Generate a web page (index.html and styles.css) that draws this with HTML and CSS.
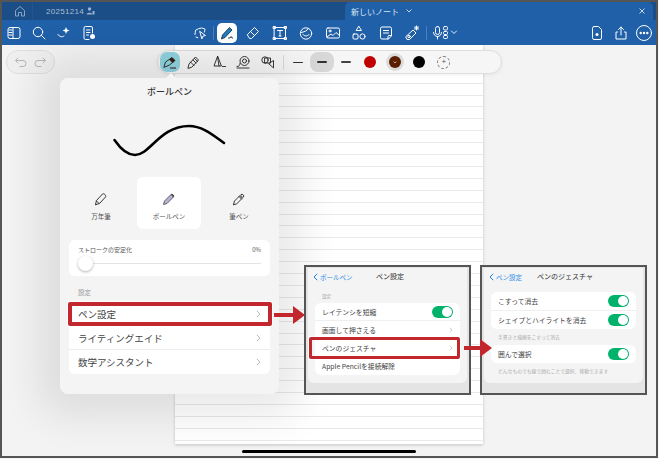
FILE: index.html
```html
<!DOCTYPE html>
<html lang="ja">
<head>
<meta charset="utf-8">
<title>ペン設定</title>
<link rel="stylesheet" href="styles.css">
</head>
<body>
<div class="frame">
  <div class="tabs">
    <div class="tab-home">
      <svg class="ic" width="14" height="14" viewBox="0 0 14 14"><path d="M2.500 12V6.500L7 2.500l4.500 4V12H8.500V8.500h-3V12z" class="tab-stroke"/></svg>
    </div>
    <div class="tab-doc"><span>20251214</span><svg width="9" height="8" viewBox="0 0 9 8"><circle cx="3.500" cy="2" r="1.700" fill="#9db4cf"/><path d="M.5 7.500C.8 5 6 5 6.500 7.500z" fill="#9db4cf"/><path d="M6.500 4h2v3.500h-2z" fill="#9db4cf"/></svg></div>
    <div class="tab-active">
      <span class="tab-name">新しいノート</span>
      <svg width="8" height="6" viewBox="0 0 8 6"><path d="M1.500 1.500L4 4l2.500-2.500" class="thin"/></svg>
      <svg class="tab-close" width="8" height="8" viewBox="0 0 8 8"><path d="M1.500 1.500l5 5m0-5l-5 5" class="thin"/></svg>
    </div>
  </div>

  <div class="toolbar">
    <div class="tb-left">
      <button class="tb"><svg width="16" height="16" viewBox="0 0 16 16"><rect x="2" y="2.500" width="12" height="11" rx="2" class="w"/><path d="M7 2.500v11M3 5h3M3 7.500h3M3 10h3" class="w"/></svg></button>
      <button class="tb"><svg width="16" height="16" viewBox="0 0 16 16"><circle cx="7" cy="7" r="4.700" class="w"/><path d="M10.500 10.500L14 14" class="w"/></svg></button>
      <button class="tb"><svg width="16" height="16" viewBox="0 0 16 16"><path d="M2 9.500c1.500 2.500 4 3 6 1.500" class="w"/><path d="M10 2l1 2.500L13.500 5.500 11 6.500 10 9 9 6.500 6.500 5.500 9 4.500z" fill="#fff"/></svg></button>
      <button class="tb"><svg width="16" height="16" viewBox="0 0 16 16"><path d="M11.500 8V3a1.500 1.500 0 00-1.500-1.500H4.500A1.500 1.500 0 003 3v10a1.500 1.500 0 001.500 1.500H8M5.500 5h3.500M5.500 7.500h3.500M5.500 10h2" class="w"/><circle cx="11.500" cy="11.500" r="2.500" fill="#fff"/></svg></button>
    </div>
    <div class="tb-center">
      <button class="tb tb-select"><svg width="16" height="16" viewBox="0 0 16 16"><path d="M4 5l3-1.500L10 3l3 1-.5 3M3 9.500l.5-4M4 12l2.500 1" class="w dash"/><path d="M8 6.500l5.500 4-2.500.5-1 2.500z" class="w"/></svg></button>
      <span class="tb-sep"></span>
      <button class="tb tb-on"><svg width="16" height="16" viewBox="0 0 16 16"><path d="M2.500 14l1-4 7-7.500 2.500 2.500-7 7.500z" fill="#1f7fc4" stroke="#123" stroke-width=".8"/><path d="M9 13h2l1-1.500 1 1.500h1" stroke="#345" stroke-width="1" fill="none"/></svg></button>
      <button class="tb"><svg width="16" height="16" viewBox="0 0 16 16"><path d="M2.500 9.500l7-7 4 4-7 7h-1.500z" class="w"/><path d="M5.500 6.500l4 4" class="w"/></svg></button>
      <button class="tb"><svg width="16" height="16" viewBox="0 0 16 16"><rect x="2.500" y="2.500" width="11" height="11" class="w"/><path d="M5.500 5.500h5M8 5.500v5.500M7 11h2" class="w"/><path d="M1.500 1.500h2v2h-2zM12.500 1.500h2v2h-2zM1.500 12.500h2v2h-2zM12.500 12.500h2v2h-2z" class="w"/></svg></button>
      <button class="tb"><svg width="16" height="16" viewBox="0 0 16 16"><circle cx="8" cy="8.500" r="5.700" class="w"/><path d="M3 7.500C6 7 9 6 10.500 3.500M5 9.500c1.500 2 4.500 2 6 0" class="w"/></svg></button>
      <button class="tb"><svg width="16" height="16" viewBox="0 0 16 16"><rect x="1.500" y="3" width="13" height="10" rx="1.500" class="w"/><circle cx="5" cy="6" r="1" class="w"/><path d="M2 12l4-3 2 1.500 3-3 3.500 3" class="w"/></svg></button>
      <button class="tb"><svg width="16" height="16" viewBox="0 0 16 16"><path d="M8 1.500l2.500 4h-5z" class="w"/><rect x="2" y="9" width="5" height="5" rx="1" class="w"/><circle cx="11.500" cy="11.500" r="2.600" class="w"/></svg></button>
      <button class="tb"><svg width="16" height="16" viewBox="0 0 16 16"><path d="M10 14H4a1.500 1.500 0 01-1.500-1.500v-9A1.500 1.500 0 014 2h8a1.500 1.500 0 011.500 1.500V10.500z" class="w"/><path d="M5.500 5.500h5M5.500 8h5M10 14v-2.500a1 1 0 011-1h2.500" class="w"/></svg></button>
      <button class="tb"><svg width="16" height="16" viewBox="0 0 16 16"><path d="M2 11.500L9 5l3 3-6.500 6.500h-2z" class="w"/><circle cx="5" cy="11.500" r="1.200" class="w"/><path d="M12.500 1v4M10.500 3h4M11 1.500l3 3M14 1.500l-3 3" class="w"/></svg></button>
      <span class="tb-sep tb-sep-r"></span>
      <button class="tb tb-mic"><svg width="26" height="16" viewBox="0 0 26 16"><rect x="3.500" y="1.500" width="4" height="8" rx="2" class="w"/><path d="M1.500 7.500a4 4 0 008 0M5.500 11.500V14" class="w"/><rect x="11.500" y="1.500" width="4" height="3.500" rx="1.200" class="w"/><rect x="11.500" y="6.500" width="4" height="3" rx="1" class="w"/><rect x="11.500" y="10.500" width="4" height="3" rx="1" class="w"/><path d="M19.500 6l2.500 2.500L24.500 6" class="w thinw"/></svg></button>
    </div>
    <div class="tb-right">
      <button class="tb"><svg width="16" height="16" viewBox="0 0 16 16"><path d="M3.500 3a1.500 1.500 0 011.500-1.500h4.500l3 3V13a1.500 1.500 0 01-1.500 1.500H5A1.500 1.500 0 013.500 13z" class="w"/><circle cx="8" cy="9.500" r="1.500" fill="#fff"/></svg></button>
      <button class="tb"><svg width="16" height="16" viewBox="0 0 16 16"><path d="M8 10V2M5.500 4.500L8 2l2.500 2.500M4.500 7H3v7h10V7h-1.500" class="w"/></svg></button>
      <button class="tb"><svg width="18" height="18" viewBox="0 0 18 18"><circle cx="9" cy="9" r="7.500" class="w"/><circle cx="5.700" cy="9" r="1.200" fill="#fff"/><circle cx="9" cy="9" r="1.200" fill="#fff"/><circle cx="12.300" cy="9" r="1.200" fill="#fff"/></svg></button>
    </div>
  </div>

  <div class="canvas">
    <div class="paper"></div>
  </div>
  <div class="home-bar"></div>

  <div class="pill pill-undo">
    <svg width="14" height="12" viewBox="0 0 14 12"><path d="M4 2L1.500 4.500 4 7M1.500 4.500H9a3 3 0 010 6H6" class="soft"/></svg>
    <svg width="14" height="12" viewBox="0 0 14 12"><path d="M10 2l2.500 2.500L10 7M12.500 4.500H5a3 3 0 000 6h3" class="soft"/></svg>
  </div>

  <div class="pill pill-tools">
    <span class="tool tool-on"><svg width="16" height="16" viewBox="0 0 16 16"><path d="M2 13l1.500-5L10 3.500 13 6.500 7.500 11z" class="k"/><path d="M7 5.500L10 3.500 13 6.500 10.500 9z" fill="#3a1c12"/><path d="M8 14h6" stroke="#555" stroke-width="1.500"/></svg></span>
    <span class="tool"><svg width="16" height="16" viewBox="0 0 16 16"><path d="M2 14l1-4 6.500-7 3 3L6 13z" class="k"/><path d="M4.500 8l3.500 3.500M7 6l3 3M8.500 4.500l3 3" class="k"/></svg></span>
    <span class="tool"><svg width="16" height="16" viewBox="0 0 16 16"><path d="M6.500 2.500L3 12h7z" class="k"/><path d="M6.500 2.500l1.500 9.500M11.500 12.500h3" class="k"/></svg></span>
    <span class="tool"><svg width="16" height="16" viewBox="0 0 16 16"><circle cx="9.500" cy="7" r="4.500" class="k"/><circle cx="9.500" cy="7" r="2" class="k"/><path d="M2 12.500c2 .5 3-1.500 3-3M2 14h12" class="k"/></svg></span>
    <span class="tool"><svg width="16" height="16" viewBox="0 0 16 16"><circle cx="5" cy="6" r="3.200" class="k"/><rect x="5" y="4" width="5.500" height="5" class="k"/><path d="M9 9.500l4.500-3v7z" class="k"/></svg></span>
    <span class="pill-sep"></span>
    <span class="stroke-btn"><i class="ln ln1"></i></span>
    <span class="stroke-btn stroke-on"><i class="ln ln2"></i></span>
    <span class="stroke-btn"><i class="ln ln3"></i></span>
    <span class="swatch"><i class="dot dot-red"></i></span>
    <span class="swatch swatch-on"><i class="dot dot-brown"><svg width="4" height="3" viewBox="0 0 4 3"><path d="M.5.5L2 2 3.500.5" stroke="#fff" stroke-width=".6" fill="none"/></svg></i></span>
    <span class="swatch"><i class="dot dot-black"></i></span>
    <span class="swatch"><i class="dot dot-add">+</i></span>
  </div>

  <div class="popover">
    <h2 class="pop-title">ボールペン</h2>
    <svg class="sample" width="220" height="55" viewBox="0 0 220 55"><path d="M54.500 21C60 29 67 36 75 36C90 36 100 7 129 7C143 7 154 17 164 24" fill="none" stroke="#000" stroke-width="2.600" stroke-linecap="round"/></svg>
    <div class="pen-types">
      <div class="pen-type">
        <svg width="14" height="14" viewBox="0 0 14 14"><path d="M1.500 12.500l1-4L8.500 2c1.500-1 4 1.500 3 3L6 11z" class="k"/><path d="M2.500 9L5 11.500" class="k"/></svg>
        <span>万年筆</span>
      </div>
      <div class="pen-type pen-on">
        <svg width="14" height="14" viewBox="0 0 14 14"><path d="M1.500 12.500l1-3.500L9 2.500l2.500 2.500L5 11.500z" fill="#b6b3d8" stroke="#444" stroke-width=".8"/><path d="M9.500 2l2.500 2.500" stroke="#333" stroke-width="1.200"/></svg>
        <span>ボールペン</span>
      </div>
      <div class="pen-type">
        <svg width="14" height="14" viewBox="0 0 14 14"><path d="M1.500 12.500l1-3.500L9 2.500c1.500-1 3.500 1 2.500 2.500L5 11.500z" class="k"/><path d="M7 4.500l2.500 2.500" class="k"/><path d="M8 3.500c1-1 3.500 1 2.500 2.500L9.500 7 7 4.500z" fill="#777"/></svg>
        <span>筆ペン</span>
      </div>
    </div>
    <div class="card slider-card">
      <div class="slider-labels"><span>ストロークの安定化</span><span>0%</span></div>
      <div class="slider"><span class="knob"></span></div>
    </div>
    <p class="section-label">設定</p>
    <div class="card list">
      <div class="row hl">ペン設定<svg class="chev" width="5" height="8" viewBox="0 0 5 8"><path d="M1 1l3 3-3 3"/></svg></div>
      <div class="row">ライティングエイド<svg class="chev" width="5" height="8" viewBox="0 0 5 8"><path d="M1 1l3 3-3 3"/></svg></div>
      <div class="row">数学アシスタント<svg class="chev" width="5" height="8" viewBox="0 0 5 8"><path d="M1 1l3 3-3 3"/></svg></div>
    </div>
  </div>

  <section class="callout callout-a">
    <div class="callout-inner">
      <div class="nav">
        <span class="back"><svg width="5" height="8" viewBox="0 0 5 8"><path d="M4.200.8L1 4l3.200 3.200"/></svg>ボールペン</span>
        <span class="nav-title nav-title-a">ペン設定</span>
      </div>
      <p class="mini-label">設定</p>
      <div class="card mini-list">
        <div class="mini-row">レイテンシを短縮<span class="toggle"></span></div>
        <div class="mini-row">画面して押さえる<svg class="chev" width="4" height="6" viewBox="0 0 5 8"><path d="M1 1l3 3-3 3"/></svg></div>
        <div class="mini-row hl-mini">ペンのジェスチャ<svg class="chev" width="4" height="6" viewBox="0 0 5 8"><path d="M1 1l3 3-3 3"/></svg></div>
        <div class="mini-row">Apple Pencilを接続解除</div>
      </div>
    </div>
  </section>

  <section class="callout callout-b">
    <div class="callout-inner">
      <div class="nav">
        <span class="back"><svg width="5" height="8" viewBox="0 0 5 8"><path d="M4.200.8L1 4l3.200 3.200"/></svg>ペン設定</span>
        <span class="nav-title nav-title-b">ペンのジェスチャ</span>
      </div>
      <div class="card mini-list first-list">
        <div class="mini-row">こすって消去<span class="toggle"></span></div>
        <div class="mini-row">シェイプとハイライトを消去<span class="toggle"></span></div>
      </div>
      <p class="note">手書きと描画をこすって消去</p>
      <div class="card mini-list">
        <div class="mini-row">囲んで選択<span class="toggle"></span></div>
      </div>
      <p class="note">どんなものでも線で囲むことで選択、移動できます</p>
    </div>
  </section>

  <svg class="arrow arrow-a" width="31" height="18" viewBox="0 0 31 18"><path d="M0 7h19V0l12 9-12 9v-7H0z" fill="#c1272d"/></svg>
  <svg class="arrow arrow-b" width="28" height="18" viewBox="0 0 28 18"><path d="M0 7h16V0l12 9-12 9v-7H0z" fill="#c1272d"/></svg>
</div>
</body>
</html>
```

FILE: styles.css
```css
* { box-sizing: border-box; }
html, body { margin: 0; padding: 0; background: #f4f4f4; }
body { width: 659px; height: 459px; overflow: hidden; font-family: "Noto Sans CJK JP", "Noto Sans", sans-serif; color: #333; }
p, h2 { margin: 0; font-weight: normal; }
button { border: 0; background: none; padding: 0; margin: 0; display: flex; align-items: center; justify-content: center; }

.frame { position: relative; width: 658px; height: 458px; border: 2px solid #555; background: #f3f3f3; overflow: hidden; display: flex; flex-direction: column; }

/* tabs */
.tabs { display: flex; height: 18px; background: #1b4d86; flex: none; }
.tab-home { width: 31px; display: flex; align-items: center; justify-content: center; padding-left: 5px; border-right: 1px solid #1f5590; }
.tab-stroke { fill: none; stroke: #8aa5c4; stroke-width: 1; }
.tab-doc { width: 312px; display: flex; align-items: center; gap: 2px; padding-left: 13px; font-size: 8px; color: #a9bdd4; font-family: "Liberation Sans", sans-serif; letter-spacing: .3px; }
.tab-active { flex: 1; background: #2060a8; border-radius: 5px 5px 0 0; display: flex; align-items: center; gap: 6px; padding: 0 7px 0 6px; font-size: 8px; color: #dfe8f3; margin-right: 3px; }
.tab-close { margin-left: auto; }
.thin { fill: none; stroke: #c5d5e8; stroke-width: 1; }

/* main toolbar */
.toolbar { display: flex; align-items: center; height: 25px; background: #2060a8; flex: none; position: relative; }
.tb { width: 25px; height: 25px; }
.tb-left { display: flex; width: 185px; flex: none; margin-left: -1px; }
.tb-center { display: flex; align-items: center; width: 290px; flex: none; }
.tb-center .tb { width: 26.500px; }
.tb-center .tb-select { width: 26px; margin-left: 1px; }
.tb-sep { width: 1px; height: 14px; background: #4d80bb; flex: none; }
.tb-center .tb-on { width: 20px; height: 20px; background: #fff; border-radius: 5px; margin: 0 3px; }
.tb-sep-r { margin-right: 2px; }
.tb-center .tb-mic { width: 32px; }
.tb-right { display: flex; margin-left: auto; }
.tb-right .tb { width: 23.500px; }
.w { fill: none; stroke: #fff; stroke-width: 1; stroke-linecap: round; stroke-linejoin: round; }
.dash { stroke-dasharray: 2 1; }
.thinw { stroke-width: .9; }
.k { fill: none; stroke: #222; stroke-width: .9; stroke-linejoin: round; stroke-linecap: round; }

/* canvas */
.canvas { flex: 1; position: relative; display: flex; justify-content: center; }
.paper { width: 308px; height: 399px; background-color: #fff; background-image: repeating-linear-gradient(to bottom, transparent 0, transparent 10.900px, #e9e9e9 10.900px, #e9e9e9 11.900px); background-position: 0 3px; box-shadow: 0 1px 3px rgba(0,0,0,.2); }
.home-bar { position: absolute; left: 240px; top: 448px; width: 174px; height: 3px; border-radius: 2px; background: #000; }

/* floating pills */
.pill { position: absolute; top: 48px; height: 24px; background: #f6f6f6; border: 1px solid #dedede; border-radius: 12px; display: flex; align-items: center; }
.pill-undo { left: 4px; width: 49px; justify-content: space-around; padding: 0 4px; background: #efefef; }
.soft { fill: none; stroke: #b5b5b5; stroke-width: 1; stroke-linecap: round; stroke-linejoin: round; }
.pill-tools { left: 155px; width: 345px; padding-left: 2px; box-shadow: 0 1px 4px rgba(0,0,0,.06); }
.tool { width: 24.500px; height: 20px; display: flex; align-items: center; justify-content: center; flex: none; }
.tool-on { width: 20px; margin-right: 2px; background: #8fd3df; border-radius: 7px; }
.pill-sep { width: 1px; height: 15px; background: #d9d9d9; margin: 0 2px 0 3px; flex: none; }
.stroke-btn { width: 24px; height: 20px; display: flex; align-items: center; justify-content: center; border-radius: 8px; flex: none; }
.stroke-on { background: #d8d8d8; }
.ln { display: block; width: 10px; background: #333; border-radius: 1px; }
.ln1 { height: 1px; }
.ln2 { height: 1.500px; }
.ln3 { height: 2.500px; background: #444; }
.swatch { width: 24.500px; height: 20px; display: flex; align-items: center; justify-content: center; flex: none; }
.swatch-on .dot { box-shadow: 0 0 0 3px #dcdcdc; }
.dot { width: 12px; height: 12px; border-radius: 50%; display: flex; align-items: center; justify-content: center; font-style: normal; }
.dot-red { background: #c00000; }
.dot-brown { background: #5a1e00; }
.dot-black { background: #000; }
.dot-add { width: 13px; height: 13px; border: 1px dashed #777; font-size: 8px; line-height: 1; color: #555; font-family: "Liberation Sans", sans-serif; }

/* popover */
.popover { position: absolute; left: 58px; top: 76px; width: 219px; height: 316px; background: #f4f4f4; border-radius: 8px; box-shadow: 0 0 40px 22px rgba(0,0,0,.09); padding: 0 9px; display: flex; flex-direction: column; }
.popover::before { content: ""; position: absolute; left: 105px; top: -5px; border: 6px solid transparent; border-top: 0; border-bottom: 6px solid #f4f4f4; }
.pop-title { font-size: 9px; font-weight: 500; text-align: center; height: 14px; line-height: 14px; margin-top: 7px; color: #333; }
.sample { display: block; margin: 20px -9px 0; flex: none; }
.pen-types { display: flex; height: 52px; margin: 3px 0 0; gap: 1px; }
.pen-type { flex: none; width: 64px; display: flex; flex-direction: column; align-items: center; gap: 6px; padding-top: 15px; font-size: 6.500px; color: #555; border-radius: 6px; }
.pen-type:first-child { margin-right: 3px; }
.pen-type:last-child { margin-left: 5px; }
.pen-on { background: #fff; }
.pen-type span { line-height: 8px; white-space: nowrap; }
.card { background: #fff; border-radius: 6px; }
.slider-card { margin-top: 11px; height: 36px; padding: 5px 9px 0; }
.slider-labels { display: flex; justify-content: space-between; font-size: 6px; line-height: 9px; color: #555; }
.slider { position: relative; height: 1px; margin: 9px 0 0; background: #e3e3e3; }
.knob { position: absolute; left: 0; top: -7px; width: 15px; height: 15px; border-radius: 50%; background: #fff; box-shadow: 0 1px 3px rgba(0,0,0,.3); }
.section-label { font-size: 6.500px; line-height: 9px; color: #999; margin: 12px 0 0 9px; }
.list { margin-top: 5px; }
.row { position: relative; height: 24px; display: flex; align-items: center; justify-content: space-between; padding: 0 9px; font-size: 9.500px; color: #444; border-bottom: 1px solid #ececec; }
.row:last-child { border-bottom: 0; }
.chev { fill: none; stroke: #bbb; stroke-width: 1; flex: none; }
.row.hl::after { content: ""; position: absolute; left: -1px; right: -2px; top: 0; bottom: -1px; border: 4px solid #c1272d; border-radius: 2px; box-shadow: 0 0 0 1px #fff; }

.arrow { position: absolute; }
.arrow-a { left: 272px; top: 304px; }
.arrow-b { left: 462px; top: 337px; }

/* callouts */
.callout { position: absolute; top: 263px; width: 167px; height: 130px; border: 2px solid #555; background: #e4e4e4; padding: 1px 2px 10px; }
.callout-a { left: 302px; }
.callout-b { left: 478px; }
.callout-inner { height: 100%; background: #f4f4f4; border-radius: 0 0 6px 6px; padding: 0 7px; }
.nav { position: relative; height: 17px; display: flex; align-items: center; font-size: 7px; }
.back { color: #2f8fe8; display: flex; align-items: center; gap: 2px; margin-left: -2px; font-size: 6.500px; }
.back svg { fill: none; stroke: #1f7fe0; stroke-width: 1; }
.nav-title { position: absolute; top: 3px; line-height: 11px; color: #333; font-size: 7px; white-space: nowrap; }
.nav-title-a { left: 61px; }
.nav-title-b { left: 46px; }
.mini-label { font-size: 4.500px; line-height: 7px; color: #999; margin: 8px 0 3px 7px; }
.mini-list { font-size: 6.800px; color: #444; }
.first-list { margin-top: 7px; }
.first-list .mini-row { height: 18.500px; }
.mini-row { position: relative; height: 18px; display: flex; align-items: center; justify-content: space-between; padding: 0 7px; border-bottom: 1px solid #efefef; white-space: nowrap; }
.mini-row:last-child { border-bottom: 0; }
.hl-mini::after { content: ""; position: absolute; left: -6px; right: 0; top: -2px; bottom: -3px; border: 3.500px solid #c1272d; border-radius: 2px; box-shadow: 0 0 0 1px #fff; }
.toggle { position: relative; width: 21px; height: 12px; border-radius: 6px; background: #00b26b; flex: none; }
.toggle::after { content: ""; position: absolute; right: 1px; top: 1px; width: 10px; height: 10px; border-radius: 50%; background: #fff; }
.note { font-size: 4.800px; line-height: 7px; color: #aaa; margin: 4px 0 5px 7px; white-space: nowrap; }
```
